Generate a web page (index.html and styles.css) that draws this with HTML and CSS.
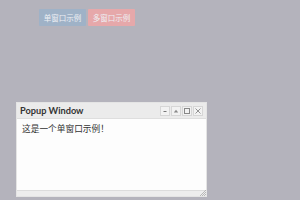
FILE: index.html
```html
<!DOCTYPE html>
<html>
<head>
<meta charset="utf-8">
<link rel="stylesheet" href="styles.css">
</head>
<body>
<div class="toolbar">
  <button class="btn btn-blue">单窗口示例</button>
  <button class="btn btn-pink">多窗口示例</button>
</div>
<div class="win">
  <div class="win-head">
    <span class="win-title">Popup Window</span>
    <div class="win-tools">
      <span class="tool">
        <svg width="8" height="8" viewBox="0 0 8 8"><path d="M2.5 4.5h3" stroke="#777" stroke-width="1"/></svg>
      </span>
      <span class="tool">
        <svg width="8" height="8" viewBox="0 0 8 8"><path d="M1.8 5.5L4 2.8 6.2 5.5z" fill="#888"/></svg>
      </span>
      <span class="tool">
        <svg width="8" height="8" viewBox="0 0 8 8"><rect x="1.5" y="1.5" width="5" height="5" fill="none" stroke="#888" stroke-width="1"/></svg>
      </span>
      <span class="tool">
        <svg width="8" height="8" viewBox="0 0 8 8"><path d="M1.5 1.5l5 5M6.5 1.5l-5 5" stroke="#888" stroke-width="0.9"/></svg>
      </span>
    </div>
  </div>
  <div class="win-body">这是一个单窗口示例！</div>
  <div class="win-foot">
    <svg class="grip" width="6" height="6" viewBox="0 0 6 6"><path d="M6 0L0 6M6 2L2 6M6 4L4 6" stroke="#aaa" stroke-width="0.8"/></svg>
  </div>
</div>
</body>
</html>
```
FILE: styles.css
```css
html, body {
  margin: 0;
  padding: 0;
  width: 300px;
  height: 200px;
  overflow: hidden;
  background: #b4b3bc;
  font-family: "Lato", "Noto Sans CJK SC", sans-serif;
}
.toolbar {
  display: flex;
  gap: 2px;
  padding: 9px 0 0 39px;
}
.btn {
  width: 47px;
  height: 17px;
  border: none;
  border-radius: 1px;
  color: #eef0f4;
  font-family: "Noto Sans CJK SC", sans-serif;
  font-size: 7.5px;
  padding: 0;
}
.btn-blue { background: #9fb2c7; }
.btn-pink { background: #e6a8aa; }
.win {
  position: absolute;
  left: 16px;
  top: 102px;
  width: 191px;
  height: 95px;
  background: #fcfcfc;
  display: flex;
  flex-direction: column;
  box-sizing: border-box;
  border: 1px solid #e4e4e4;
}
.win-head {
  height: 15px;
  background: #ebebeb;
  display: flex;
  align-items: center;
  justify-content: space-between;
  padding: 0 3px 0 3px;
  border-bottom: 1px solid #dedede;
}
.win-title {
  font-weight: 700;
  font-size: 9.2px;
  color: #333;
}
.win-tools {
  display: flex;
  gap: 1px;
}
.tool {
  width: 10px;
  height: 10px;
  box-sizing: border-box;
  border: 1px solid #d6d6d6;
  background: #f2f2f2;
  display: flex;
  align-items: center;
  justify-content: center;
}
.tool svg { display: block; }
.win-body {
  flex: 1;
  padding: 3px 5px;
  font-family: "Noto Sans CJK SC", sans-serif;
  font-size: 8.7px;
  color: #333;
  background: #fdfdfd;
}
.win-foot {
  height: 5px;
  background: #ededed;
  border-top: 1px solid #dcdcdc;
  position: relative;
}
.grip {
  position: absolute;
  right: 0;
  bottom: 0;
}
```
